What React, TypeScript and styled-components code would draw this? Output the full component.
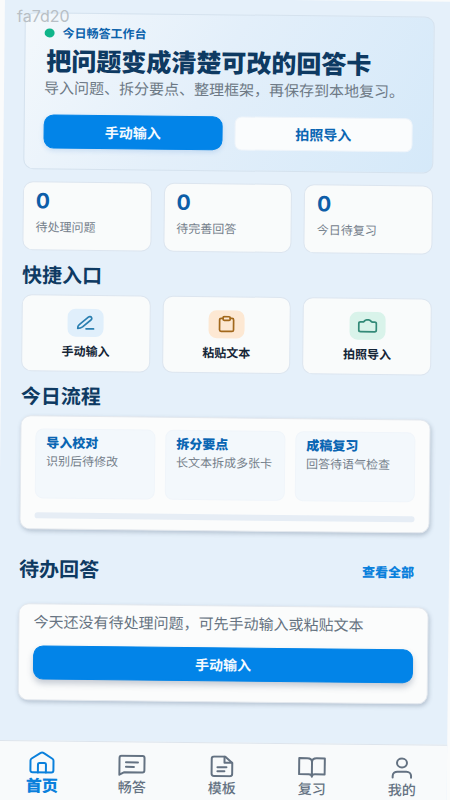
import React from "react";
import styled, { createGlobalStyle } from "styled-components";

const GlobalStyle = createGlobalStyle`
  *, *::before, *::after { box-sizing: border-box; }
  body {
    margin: 0;
    background: #fafbfb;
    font-family: "Noto Sans CJK SC", "Noto Sans", sans-serif;
    color: #12304d;
  }
  button { font-family: inherit; cursor: pointer; }
  h1, h2, h3, p, dl, dd, dt { margin: 0; }
`;

const Viewport = styled.div`
  position: relative;
  height: 100vh;
  overflow: hidden;
`;

const Page = styled.div`
  display: flex;
  flex-direction: column;
  min-height: calc(100vh + 12px);
  background: #e5f0fa;
  transform: translate(5px, -3px) rotate(0.6deg);
  transform-origin: 0 0;
`;

const Watermark = styled.span`
  position: absolute;
  left: 17px;
  top: 6px;
  font: 16px/20px Inter, sans-serif;
  color: #b8bfc5;
`;

const Main = styled.main`
  flex: 1;
  padding: 15px 20px 0;
`;

const Hero = styled.section`
  height: 157px;
  padding: 9px 20px 0 19px;
  border: 1px solid #d5e2ee;
  border-radius: 10px;
  background: linear-gradient(120deg, #f3f8fc 0%, #e3effa 45%, #d5e9f9 100%);
`;

const Eyebrow = styled.p`
  display: flex;
  align-items: center;
  gap: 8px;
  font-size: 12px;
  line-height: 20px;
  font-weight: 700;
  color: #0b62ab;
`;

const Dot = styled.i`
  width: 10px;
  height: 9px;
  border-radius: 50%;
  background: #0fb58a;
`;

const Title = styled.h1`
  padding-left: 2px;
  font-size: 25px;
  line-height: 34px;
  font-weight: 900;
  color: #0e3a62;
  white-space: nowrap;
`;

const Lead = styled.p`
  margin-top: 2px;
  font-size: 15px;
  line-height: 18px;
  color: #6d7985;
  white-space: nowrap;
`;

const HeroActions = styled.div`
  display: grid;
  grid-template-columns: 1fr 1fr;
  gap: 12px;
  margin-top: 18px;
`;

const Button = styled.button<{ $primary?: boolean; $raised?: boolean }>`
  width: 100%;
  height: 34px;
  padding: 0;
  border: 1px solid ${(p) => (p.$primary ? "#0284e8" : "#eef4fa")};
  border-radius: ${(p) => (p.$primary ? "10px" : "7px")};
  background: ${(p) => (p.$primary ? "#0284e8" : "#fafcfd")};
  color: ${(p) => (p.$primary ? "#f4faff" : "#0a66b3")};
  font-size: 14px;
  line-height: 20px;
  font-weight: 700;
  box-shadow: ${(p) =>
    p.$raised
      ? "0 4px 6px rgba(60, 80, 110, 0.28)"
      : p.$primary
        ? "0 2px 5px rgba(60, 130, 210, 0.2)"
        : "none"};
`;

const Triple = styled.div`
  display: grid;
  grid-template-columns: repeat(3, 1fr);
  gap: 12px;
`;

const Stats = styled(Triple).attrs({ as: "dl" })`
  margin-top: 12px;
`;

const Stat = styled.div`
  display: flex;
  flex-direction: column-reverse;
  justify-content: flex-end;
  height: 69px;
  padding: 7px 12px 0;
  border: 1px solid #dce5ef;
  border-radius: 10px;
  background: #f9fbfb;
`;

const StatValue = styled.dd`
  font: 700 21px/24px Inter, sans-serif;
  color: #0d5ea8;
`;

const StatLabel = styled.dt`
  padding-top: 3px;
  font-size: 12px;
  line-height: 20px;
  color: #75808b;
`;

const SectionHead = styled.div<{ $tall?: boolean }>`
  display: flex;
  align-items: center;
  justify-content: space-between;
  height: ${(p) => (p.$tall ? "74px" : "44px")};
  padding: ${(p) => (p.$tall ? "4px 15px 0 0" : "4px 0 0")};
`;

const Heading = styled.h2`
  font-size: 20px;
  line-height: 24px;
  font-weight: 700;
  color: #0e3a62;
`;

const MoreLink = styled.a`
  font-size: 13px;
  line-height: 20px;
  font-weight: 900;
  color: #0a80dc;
  text-decoration: none;
`;

const Shortcut = styled.button`
  display: flex;
  flex-direction: column;
  align-items: center;
  gap: 4px;
  height: 77px;
  padding: 13px 0 0;
  border: 1px solid #dce5ef;
  border-radius: 10px;
  background: #f9fbfb;
  color: #142536;
  font-size: 12px;
  line-height: 20px;
  font-weight: 700;
`;

const Tile = styled.span<{ $bg: string; $ink: string }>`
  display: grid;
  place-items: center;
  width: 36px;
  height: 28px;
  border-radius: 8px;
  background: ${(p) => p.$bg};
  color: ${(p) => p.$ink};
`;

const Panel = styled.section`
  border: 1px solid #e3e8ee;
  border-radius: 10px;
  background: #fbfcfc;
  box-shadow: 1px 2px 4px rgba(70, 90, 115, 0.3);
`;

const FlowPanel = styled(Panel)`
  height: 114px;
  padding: 12px 14px 0;
`;

const Steps = styled(Triple)`
  gap: 10px;
`;

const Step = styled.article`
  height: 70px;
  padding: 4px 10px 0;
  border: 1px solid #f0f5fa;
  border-radius: 8px;
  background: #f3f8fc;
  white-space: nowrap;
`;

const StepTitle = styled.h3`
  font-size: 13px;
  line-height: 18px;
  font-weight: 900;
  color: #0a66b3;
`;

const StepNote = styled.p`
  font-size: 12px;
  line-height: 18px;
  color: #75808b;
`;

const Track = styled.div`
  height: 6px;
  margin-top: 14px;
  border-radius: 3px;
  background: #e6edf5;
`;

const EmptyPanel = styled(Panel)`
  height: 97px;
  padding: 7px 14px 0;
`;

const EmptyText = styled.p`
  margin-bottom: 14px;
  font-size: 15px;
  line-height: 20px;
  color: #667381;
  white-space: nowrap;
`;

const TabBar = styled.nav`
  display: grid;
  grid-template-columns: repeat(5, 1fr);
  height: 69px;
  border-top: 1px solid #dde4ec;
  background: #f8fafb;
`;

const Tab = styled.a<{ $active?: boolean }>`
  display: flex;
  flex-direction: column;
  align-items: center;
  padding-top: ${(p) => (p.$active ? "9px" : "12px")};
  color: ${(p) => (p.$active ? "#0a80dc" : "#647282")};
  font-size: ${(p) => (p.$active ? "16px" : "14px")};
  line-height: 20px;
  font-weight: ${(p) => (p.$active ? 900 : 500)};
  text-decoration: none;
`;

type IconProps = { w: number; h: number; children: React.ReactNode };

const Icon = ({ w, h, children }: IconProps) => (
  <svg
    width={w}
    height={h}
    viewBox={`0 0 ${w} ${h}`}
    fill="none"
    stroke="currentColor"
    strokeWidth="2"
    strokeLinecap="round"
    strokeLinejoin="round"
    aria-hidden="true"
  >
    {children}
  </svg>
);

const stats = [
  { label: "待处理问题", value: 0 },
  { label: "待完善回答", value: 0 },
  { label: "今日待复习", value: 0 },
];

const shortcuts = [
  {
    label: "手动输入",
    bg: "#e0effb",
    ink: "#2a7fb0",
    icon: (
      <Icon w={20} h={16}>
        <path strokeWidth="1.7" d="M2.2 13.6c-.2-1.5.3-2.7 1.500-3.700l9-7.600c1.100-.9 2.600-.6 3.200.2.600.9.3 1.800-.6 2.600L7 12c-1.300 1-2.900 1.600-4.800 1.600z" />
        <path strokeWidth="1.7" d="M10.5 14h7.5" />
      </Icon>
    ),
  },
  {
    label: "粘贴文本",
    bg: "#fde8d3",
    ink: "#a2681c",
    icon: (
      <Icon w={20} h={18}>
        <path strokeWidth="1.7" d="M6.4 3H4.6C3.6 3 3 3.6 3 4.5v10c0 .9.6 1.5 1.6 1.5h10.8c1 0 1.6-.6 1.6-1.5v-10c0-.9-.6-1.5-1.6-1.5h-1.8" />
        <rect strokeWidth="1.7" x="6.4" y="1.4" width="7.2" height="3.6" rx="1.2" />
      </Icon>
    ),
  },
  {
    label: "拍照导入",
    bg: "#d9f3ea",
    ink: "#338a78",
    icon: (
      <Icon w={20} h={16}>
        <path strokeWidth="1.8" d="M3 4.2h2c.7 0 1.200-.3 1.700-.9C7.400 2.400 8.100 2 9 2h2c.9 0 1.600.4 2.300 1.300.5.6 1 .9 1.700.9h2c1 0 1.800.7 1.800 1.600v6.500c0 .9-.8 1.600-1.800 1.600H3c-1 0-1.800-.7-1.800-1.600V5.800c0-.9.8-1.600 1.800-1.600z" />
      </Icon>
    ),
  },
];

const steps = [
  { title: "导入校对", note: "识别后待修改" },
  { title: "拆分要点", note: "长文本拆成多张卡" },
  { title: "成稿复习", note: "回答待语气检查" },
];

const tabs = [
  {
    label: "首页",
    icon: (
      <Icon w={28} h={24}>
        <path d="M2.500 10.200c0-.8.4-1.500 1.100-2L12.600 2.500c.9-.6 1.900-.6 2.800 0l9 5.700c.7.5 1.100 1.200 1.100 2v9.800c0 1.200-.9 2-2.100 2H4.600c-1.200 0-2.100-.8-2.100-2z" />
        <path d="M10 22v-8c0-.9.6-1.500 1.500-1.500h5c.9 0 1.500.6 1.500 1.500v8" />
      </Icon>
    ),
  },
  {
    label: "畅答",
    icon: (
      <Icon w={28} h={22}>
        <path d="M1.500 20.500V3.500c0-1.200.8-2 2-2h21c1.200 0 2 .8 2 2v12.500c0 1.200-.8 2-2 2H6z" />
        <path d="M8 8h12M8 12.500h8" />
      </Icon>
    ),
  },
  {
    label: "模板",
    icon: (
      <Icon w={24} h={22}>
        <path d="M15 1.200H4.200c-1.500 0-2.500.9-2.500 2.200v15.200c0 1.300 1 2.200 2.500 2.200h15.600c1.500 0 2.500-.9 2.500-2.200V7.500z" />
        <path d="M14.500 1.500v5.800h7.500M7.500 12h9M7.500 16h7" />
      </Icon>
    ),
  },
  {
    label: "复习",
    icon: (
      <Icon w={28} h={22}>
        <path d="M14 20.500c0-1.700-1.300-2.500-3.200-2.500H1.200V2h8c3 0 4.800 1.500 4.800 3.700zM14 20.500c0-1.700 1.300-2.500 3.200-2.500h9.600V2h-8c-3 0-4.800 1.500-4.800 3.700" />
      </Icon>
    ),
  },
  {
    label: "我的",
    icon: (
      <Icon w={24} h={22}>
        <ellipse cx="12" cy="5.800" rx="5" ry="4.400" />
        <path d="M2.800 20.500v-1.700c0-2.500 2-4.300 4.800-4.300h8.800c2.800 0 4.800 1.800 4.800 4.300v1.700" />
      </Icon>
    ),
  },
];

export default function App() {
  return (
    <Viewport>
      <GlobalStyle />
      <Page>
        <Main>
          <Hero>
            <Eyebrow>
              <Dot />
              今日畅答工作台
            </Eyebrow>
            <Title>把问题变成清楚可改的回答卡</Title>
            <Lead>导入问题、拆分要点、整理框架，再保存到本地复习。</Lead>
            <HeroActions>
              <Button $primary>手动输入</Button>
              <Button>拍照导入</Button>
            </HeroActions>
          </Hero>

          <Stats>
            {stats.map((s) => (
              <Stat key={s.label}>
                <StatLabel>{s.label}</StatLabel>
                <StatValue>{s.value}</StatValue>
              </Stat>
            ))}
          </Stats>

          <SectionHead>
            <Heading>快捷入口</Heading>
          </SectionHead>
          <Triple>
            {shortcuts.map((s) => (
              <Shortcut key={s.label}>
                <Tile $bg={s.bg} $ink={s.ink}>
                  {s.icon}
                </Tile>
                {s.label}
              </Shortcut>
            ))}
          </Triple>

          <SectionHead>
            <Heading>今日流程</Heading>
          </SectionHead>
          <FlowPanel>
            <Steps>
              {steps.map((s) => (
                <Step key={s.title}>
                  <StepTitle>{s.title}</StepTitle>
                  <StepNote>{s.note}</StepNote>
                </Step>
              ))}
            </Steps>
            <Track />
          </FlowPanel>

          <SectionHead $tall>
            <Heading>待办回答</Heading>
            <MoreLink href="#all">查看全部</MoreLink>
          </SectionHead>
          <EmptyPanel>
            <EmptyText>今天还没有待处理问题，可先手动输入或粘贴文本</EmptyText>
            <Button $primary $raised>
              手动输入
            </Button>
          </EmptyPanel>
        </Main>

        <TabBar>
          {tabs.map((t, i) => (
            <Tab key={t.label} href={`#tab-${i}`} $active={i === 0}>
              {t.icon}
              {t.label}
            </Tab>
          ))}
        </TabBar>
      </Page>
      <Watermark>fa7d20</Watermark>
    </Viewport>
  );
}
